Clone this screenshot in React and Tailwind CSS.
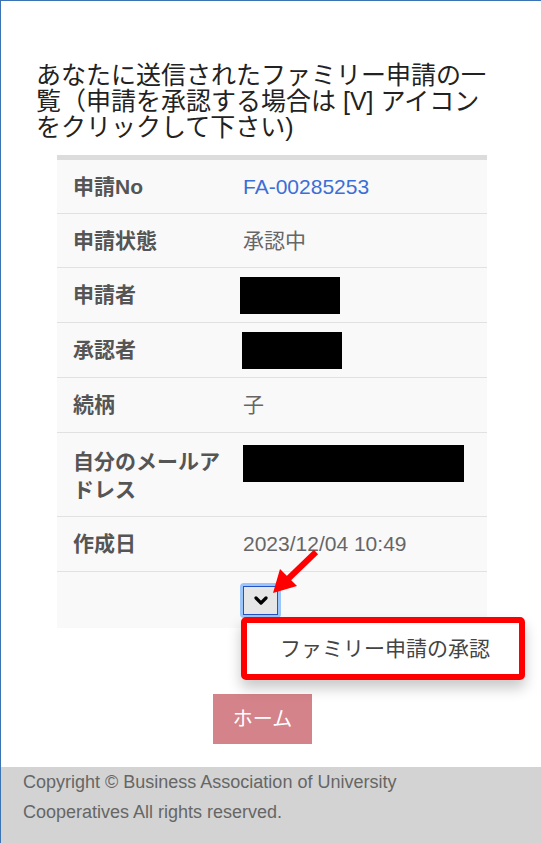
const jp = { fontFamily: '"Liberation Sans", "Noto Sans CJK JP", sans-serif' };

function Row({ label, children, h = "h-[55px]", last = false, top = false }) {
  return (
    <div className={`flex ${h} ${top ? "items-start pt-[15px]" : "items-center"} ${last ? "" : "border-b border-[#e1e1e1]"}`}>
      <div className="w-[178px] shrink-0 pl-4 pr-2 text-[21px] leading-[28px] font-bold text-[#555]">{label}</div>
      <div className="flex-1 pl-2 text-[21px] leading-[28px] text-[#666]">{children}</div>
    </div>
  );
}

function Redacted({ w, cls = "" }) {
  return <div className={`h-[37px] bg-black ${w} ${cls}`} />;
}

export default function App() {
  return (
    <div className="relative w-full h-[843px] border-t border-l border-[#3b73b5] bg-white flex flex-col" style={jp}>
      <div className="pt-[61px] pl-[35px] text-[25px] leading-[26px] text-[#222] whitespace-nowrap">
        <span className="block">あなたに送信されたファミリー申請の一</span>
        <span className="block">覧（申請を承認する場合は [V] アイコン</span>
        <span className="block">をクリックして下さい)</span>
      </div>

      <div className="ml-[56px] mt-[15px] w-[430px] bg-[#f9f9f9] border-t-[5px] border-[#dcdcdc]">
        <Row label="申請No" h="h-[54px]">
          <span className="text-[#3b6fd6]">FA-00285253</span>
        </Row>
        <Row label="申請状態" h="h-[54px]">承認中</Row>
        <Row label="申請者">
          <Redacted w="w-[100px]" cls="-ml-[3px]" />
        </Row>
        <Row label="承認者">
          <Redacted w="w-[100px]" cls="-ml-[1px]" />
        </Row>
        <Row label="続柄">子</Row>
        <Row label="自分のメールアドレス" h="h-[84px]" top>
          <Redacted w="w-[221px]" cls="-mt-[3px]" />
        </Row>
        <Row label="作成日">2023/12/04 10:49</Row>
        <div className="h-[56px] pt-[11px] pl-[183px]">
          <div className="w-[41px] h-[35px] rounded-[4px] bg-[#9cc6fa] p-[3px]">
            <div className="w-full h-full bg-[#e6e6e6] border border-[#2450c8] flex items-center justify-center">
              <svg width="14" height="9" viewBox="0 0 14 9">
                <polyline points="2,2 7,7 12,2" fill="none" stroke="#000" strokeWidth="3.2" strokeLinecap="round" strokeLinejoin="round" />
              </svg>
            </div>
          </div>
        </div>
      </div>

      <div className="mt-[66px] ml-[212px] w-[99px] h-[50px] bg-[#d5838a] text-white text-[20px] flex items-center justify-center">
        ホーム
      </div>

      <div className="mt-auto h-[76px] bg-[#d3d3d3] pl-[22px] text-[18px] leading-[30px] text-[#666]">
        <div>Copyright © Business Association of University</div>
        <div>Cooperatives All rights reserved.</div>
      </div>

      {/* popup menu with annotation */}
      <div className="absolute left-[240px] top-[616px] w-[284px] h-[63px] bg-white border-[6px] border-[#ff0000] rounded-[5px] shadow-[0_8px_14px_rgba(0,0,0,0.22)] flex items-center pl-[33px] text-[21px] text-[#444]">
        ファミリー申請の承認
      </div>
      <svg className="absolute left-0 top-0 pointer-events-none" width="541" height="843">
        <line x1="315" y1="551" x2="287" y2="578" stroke="#ff0000" strokeWidth="6" />
        <polygon points="272,592 279,568 296,585" fill="#ff0000" />
      </svg>
    </div>
  );
}
